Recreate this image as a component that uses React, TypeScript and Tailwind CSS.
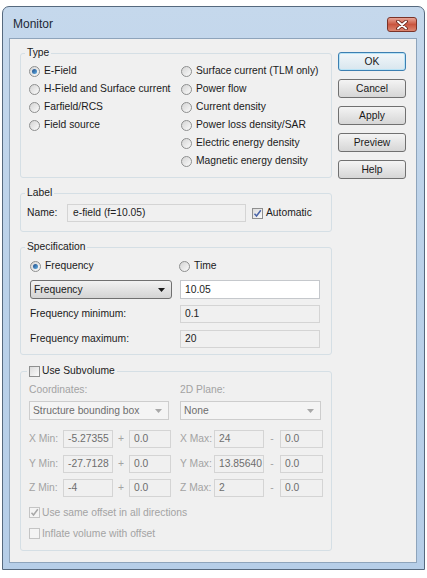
import React from 'react'

const GRAY = 'text-[#a3a3a3]'

const Radio = ({ label, checked = false }: { label: string; checked?: boolean }) => (
  <div className="flex items-center h-[18px]">
    <span className="flex items-center justify-center w-[11px] h-[11px] rounded-full border border-[#8e8f8f] bg-linear-to-br from-[#d4d4d4] to-[#fbfbfb] shrink-0">
      {checked && (
        <span className="w-[5px] h-[5px] rounded-full bg-linear-to-br from-[#1e4a86] to-[#64b1e6]" />
      )}
    </span>
    <span className="ml-[4px] whitespace-nowrap">{label}</span>
  </div>
)

const Check = ({ checked = false, disabled = false }: { checked?: boolean; disabled?: boolean }) => (
  <span
    className={`flex items-center justify-center w-[11px] h-[11px] border shrink-0 ${
      disabled ? 'border-[#c4c4c4] bg-[#f4f4f4]' : 'border-[#8e8f8f] bg-linear-to-br from-[#dcdcdc] to-[#fbfbfb]'
    }`}
  >
    {checked && (
      <svg width="9" height="9" viewBox="0 0 9 9">
        <path
          d="M1.5 4.8 L3.5 7 L7.8 1.2"
          fill="none"
          stroke={disabled ? '#a8a8a8' : '#4a64a8'}
          strokeWidth="1.5"
        />
      </svg>
    )}
  </span>
)

const Arrow = ({ color }: { color: string }) => (
  <svg width="7" height="4" viewBox="0 0 7 4">
    <polygon points="0,0 7,0 3.5,4" fill={color} />
  </svg>
)

const Field = ({ value, className = '', white = false, dim = false }: { value: string; className?: string; white?: boolean; dim?: boolean }) => (
  <div
    className={`h-[18px] flex items-center px-[4px] border overflow-hidden whitespace-nowrap ${
      white ? 'bg-white border-[#c5c8cc]' : 'bg-[#f0f0f0] border-[#d4d4d4]'
    } ${dim ? 'text-[#6d6d6d]' : 'text-[#222]'} ${className}`}
  >
    {value}
  </div>
)

const Button = ({ label, primary = false }: { label: string; primary?: boolean }) => (
  <div
    className={`w-[68px] h-[19px] flex items-center justify-center rounded-[3px] border bg-linear-to-b ${
      primary
        ? 'border-[#3c7fb1] from-[#f2f7fa] to-[#d8e6ee] shadow-[inset_0_0_0_1px_#b8e3f6]'
        : 'border-[#707070] from-[#f4f4f4] to-[#d6d6d6]'
    }`}
  >
    {label}
  </div>
)

const CoordRow = ({ axis, min, max }: { axis: string; min: string; max: string }) => (
  <div className="flex items-center h-[18px]">
    <span className={`w-[34px] ${GRAY}`}>{axis} Min:</span>
    <Field value={min} dim className="w-[50px]" />
    <span className={`w-[16px] text-center ${GRAY}`}>+</span>
    <Field value="0.0" dim className="w-[42px]" />
    <span className={`ml-[9px] w-[34px] ${GRAY}`}>{axis} Max:</span>
    <Field value={max} dim className="w-[50px]" />
    <span className={`w-[16px] text-center ${GRAY}`}>-</span>
    <Field value="0.0" dim className="w-[43px]" />
  </div>
)

export default function App() {
  return (
    <div className="h-[578px] bg-white pt-[6px] pl-[2px] font-['Liberation_Sans',Arial,sans-serif] text-[10.3px] text-[#1a1a1a]">
      <div className="w-[423px] h-[564px] flex flex-col border border-[#56697e] rounded-t-[7px] bg-linear-to-b from-[#c5d8ec] via-[#bad1e9] to-[#b6cee8]">
        {/* title bar */}
        <div className="h-[31px] flex justify-between pl-[10px] pr-[7px] pt-[10px]">
          <span className="text-[12px] leading-[15px] text-[#1c2836]">Monitor</span>
          <div className="w-[30px] h-[15px] flex items-center justify-center rounded-[3px] border border-[#7a3328] bg-linear-to-b from-[#e7a597] via-[#c9553f] to-[#dc8670]">
            <svg width="12" height="10" viewBox="0 0 12 10">
              <path d="M2 1.5 L10 8.5 M10 1.5 L2 8.5" stroke="#5a1a12" strokeWidth="3.6" strokeLinecap="round" />
              <path d="M2 1.5 L10 8.5 M10 1.5 L2 8.5" stroke="#ffffff" strokeWidth="2" strokeLinecap="round" />
            </svg>
          </div>
        </div>

        {/* client area */}
        <div className="flex-1 ml-[6px] mr-[7px] mb-[6px] border border-[#8ea4bb] bg-[#f0f0f0] flex pl-[10px] pt-[7px]">
          <div className="w-[312px] flex flex-col">
            <fieldset className="border border-[#d5dfe5] rounded-[3px]">
              <legend className="ml-[4px] px-[2px] leading-[14px]">Type</legend>
              <div className="flex pl-[8px] pt-[2px] pb-[7px]">
                <div className="w-[152px]">
                  <Radio label="E-Field" checked />
                  <Radio label="H-Field and Surface current" />
                  <Radio label="Farfield/RCS" />
                  <Radio label="Field source" />
                </div>
                <div>
                  <Radio label="Surface current (TLM only)" />
                  <Radio label="Power flow" />
                  <Radio label="Current density" />
                  <Radio label="Power loss density/SAR" />
                  <Radio label="Electric energy density" />
                  <Radio label="Magnetic energy density" />
                </div>
              </div>
            </fieldset>

            <fieldset className="mt-[8px] border border-[#d5dfe5] rounded-[3px]">
              <legend className="ml-[4px] px-[2px] leading-[14px]">Label</legend>
              <div className="flex items-center h-[18px] ml-[6px] mt-[4px] mb-[9px]">
                <span className="w-[40px]">Name:</span>
                <Field value="e-field (f=10.05)" className="w-[179px] pl-[5px]" />
                <span className="ml-[6px]">
                  <Check checked />
                </span>
                <span className="ml-[3px]">Automatic</span>
              </div>
            </fieldset>

            <fieldset className="mt-[8px] border border-[#d5dfe5] rounded-[3px]">
              <legend className="ml-[4px] px-[2px] leading-[14px]">Specification</legend>
              <div className="pl-[9px] pt-[3px] pb-[6px]">
                <div className="flex">
                  <div className="w-[149px]">
                    <Radio label="Frequency" checked />
                  </div>
                  <Radio label="Time" />
                </div>
                <div className="flex mt-[5px]">
                  <div className="w-[142px] h-[19px] flex items-center justify-between pl-[3px] pr-[6px] rounded-[3px] border border-[#707070] bg-linear-to-b from-[#f2f2f2] to-[#d4d4d4]">
                    <span>Frequency</span>
                    <Arrow color="#1a1a1a" />
                  </div>
                  <Field value="10.05" white className="ml-[8px] w-[140px] h-[19px]" />
                </div>
                <div className="flex items-center mt-[6px]">
                  <span className="w-[150px]">Frequency minimum:</span>
                  <Field value="0.1" className="w-[140px]" />
                </div>
                <div className="flex items-center mt-[7px]">
                  <span className="w-[150px]">Frequency maximum:</span>
                  <Field value="20" className="w-[140px]" />
                </div>
              </div>
            </fieldset>

            <fieldset className="mt-[8px] border border-[#d5dfe5] rounded-[3px]">
              <legend className="ml-[6px] px-[2px] h-[16px] flex items-center">
                <Check />
                <span className="ml-[2px]">Use Subvolume</span>
              </legend>
              <div className="pl-[8px] pt-[4px] pb-[6px]">
                <div className={`flex h-[14px] items-center ${GRAY}`}>
                  <span className="w-[151px]">Coordinates:</span>
                  <span>2D Plane:</span>
                </div>
                <div className="flex mt-[4px]">
                  <div className="w-[140px] h-[19px] flex items-center justify-between pl-[3px] pr-[6px] border border-[#cdcdcd] bg-[#f4f4f4] text-[#6d6d6d]">
                    <span>Structure bounding box</span>
                    <Arrow color="#a8a8a8" />
                  </div>
                  <div className="ml-[11px] w-[141px] h-[19px] flex items-center justify-between pl-[3px] pr-[6px] border border-[#cdcdcd] bg-[#f4f4f4] text-[#6d6d6d]">
                    <span>None</span>
                    <Arrow color="#a8a8a8" />
                  </div>
                </div>
                <div className="flex flex-col gap-[6.5px] mt-[10px]">
                  <CoordRow axis="X" min="-5.27355" max="24" />
                  <CoordRow axis="Y" min="-27.7128" max="13.85640" />
                  <CoordRow axis="Z" min="-4" max="2" />
                </div>
                <div className="mt-[5px]">
                  <div className="flex items-center h-[21px]">
                    <Check checked disabled />
                    <span className={`ml-[2px] ${GRAY}`}>Use same offset in all directions</span>
                  </div>
                  <div className="flex items-center h-[21px]">
                    <Check disabled />
                    <span className={`ml-[2px] ${GRAY}`}>Inflate volume with offset</span>
                  </div>
                </div>
              </div>
            </fieldset>
          </div>

          {/* buttons */}
          <div className="ml-[6px] mt-[6px] flex flex-col gap-[8px]">
            <Button label="OK" primary />
            <Button label="Cancel" />
            <Button label="Apply" />
            <Button label="Preview" />
            <Button label="Help" />
          </div>
        </div>
      </div>
    </div>
  )
}
